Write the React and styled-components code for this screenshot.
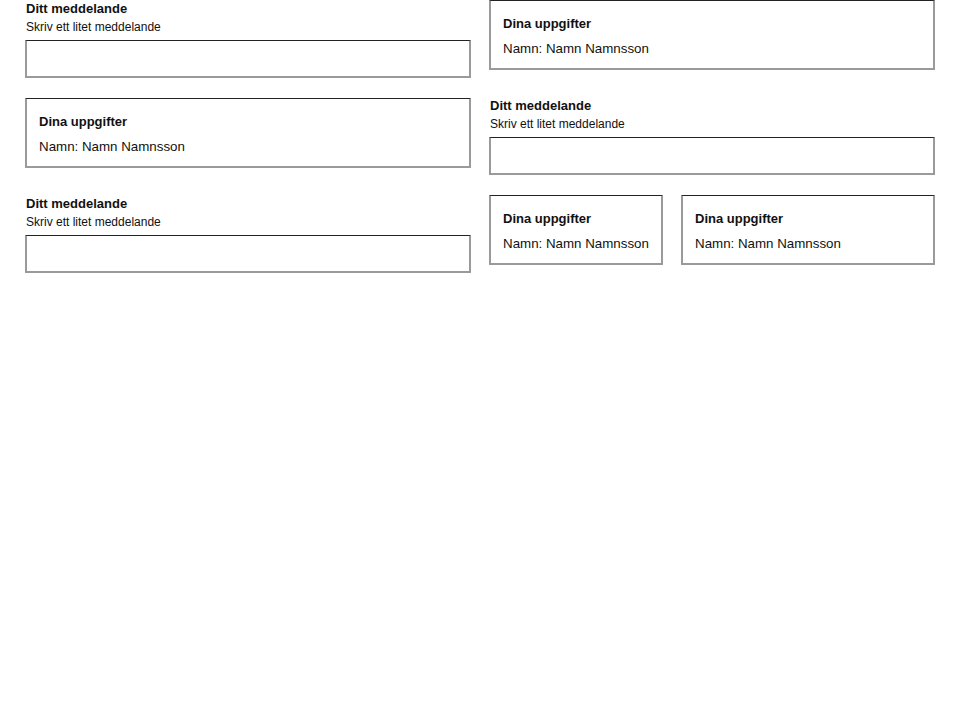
import styled, { createGlobalStyle } from "styled-components";

const GlobalStyle = createGlobalStyle`
  body {
    margin: 0;
    background: #fff;
    font-family: "Liberation Sans", Arial, sans-serif;
    color: #111;
  }
`

const Page = styled.div`
  display: grid;
  grid-template-columns: 446px 446px;
  column-gap: 18px;
  padding: 0 25px;
  align-items: start;
`
const Column = styled.div`
  display: flex;
  flex-direction: column;
  gap: 20px;
`
const Row = styled.div`
  display: grid;
  grid-template-columns: ${p => p.$cols};
  gap: 18px;
`
const Field = styled.div`
  padding-top: ${p => (p.$flush ? "1px" : "8px")};
`
const Label = styled.div`
  font-size: 13px;
  font-weight: 700;
  line-height: 16px;
  padding-left: 1px;
`
const Hint = styled.div`
  font-size: 12px;
  line-height: 16px;
  margin-top: 2px;
  padding-left: 1px;
`
const Input = styled.div`
  box-sizing: border-box;
  height: 38px;
  margin-top: 5px;
  border: 2px solid #9a9a9a;
  border-top: 1px solid #222;
`
const Card = styled.div`
  box-sizing: border-box;
  height: 70px;
  padding: 14px 6px 0 12px;
  border: 2px solid #9a9a9a;
  border-top: 1px solid #222;
  white-space: nowrap;
`
const CardTitle = styled.div`
  font-size: 13px;
  font-weight: 700;
  line-height: 18px;
`
const CardText = styled.div`
  font-size: 13.33px;
  line-height: 18px;
  margin-top: 7px;
`

const Message = ({ flush }) => (
    <Field $flush={flush}>
        <Label>Ditt meddelande</Label>
        <Hint>Skriv ett litet meddelande</Hint>
        <Input/>
    </Field>
)

const Details = () => (
    <Card>
        <CardTitle>Dina uppgifter</CardTitle>
        <CardText>Namn: Namn Namnsson</CardText>
    </Card>
)

const App = () => {
    return (
        <>
            <GlobalStyle/>
            <Page>
                <Column>
                    <Message flush/>
                    <Details/>
                    <Message/>
                </Column>
                <Column>
                    <Details/>
                    <Message/>
                    <Row $cols="174px 254px">
                        <Details/>
                        <Details/>
                    </Row>
                </Column>
            </Page>
        </>
    )
}
export default App;
